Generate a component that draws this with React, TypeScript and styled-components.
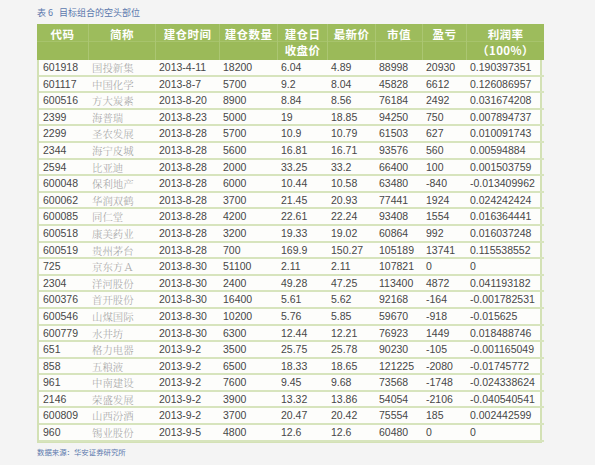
import styled, { createGlobalStyle } from 'styled-components';

// -- DATA --
const rows: string[][] = [
    ['601918', '国投新集', '2013-4-11', '18200', '6.04', '4.89', '88998', '20930', '0.190397351'],
    ['601117', '中国化学', '2013-8-7', '5700', '9.2', '8.04', '45828', '6612', '0.126086957'],
    ['600516', '方大炭素', '2013-8-20', '8900', '8.84', '8.56', '76184', '2492', '0.031674208'],
    ['2399', '海普瑞', '2013-8-23', '5000', '19', '18.85', '94250', '750', '0.007894737'],
    ['2299', '圣农发展', '2013-8-28', '5700', '10.9', '10.79', '61503', '627', '0.010091743'],
    ['2344', '海宁皮城', '2013-8-28', '5600', '16.81', '16.71', '93576', '560', '0.00594884'],
    ['2594', '比亚迪', '2013-8-28', '2000', '33.25', '33.2', '66400', '100', '0.001503759'],
    ['600048', '保利地产', '2013-8-28', '6000', '10.44', '10.58', '63480', '-840', '-0.013409962'],
    ['600062', '华润双鹤', '2013-8-28', '3700', '21.45', '20.93', '77441', '1924', '0.024242424'],
    ['600085', '同仁堂', '2013-8-28', '4200', '22.61', '22.24', '93408', '1554', '0.016364441'],
    ['600518', '康美药业', '2013-8-28', '3200', '19.33', '19.02', '60864', '992', '0.016037248'],
    ['600519', '贵州茅台', '2013-8-28', '700', '169.9', '150.27', '105189', '13741', '0.115538552'],
    ['725', '京东方Ａ', '2013-8-30', '51100', '2.11', '2.11', '107821', '0', '0'],
    ['2304', '洋河股份', '2013-8-30', '2400', '49.28', '47.25', '113400', '4872', '0.041193182'],
    ['600376', '首开股份', '2013-8-30', '16400', '5.61', '5.62', '92168', '-164', '-0.001782531'],
    ['600546', '山煤国际', '2013-8-30', '10200', '5.76', '5.85', '59670', '-918', '-0.015625'],
    ['600779', '水井坊', '2013-8-30', '6300', '12.44', '12.21', '76923', '1449', '0.018488746'],
    ['651', '格力电器', '2013-9-2', '3500', '25.75', '25.78', '90230', '-105', '-0.001165049'],
    ['858', '五粮液', '2013-9-2', '6500', '18.33', '18.65', '121225', '-2080', '-0.01745772'],
    ['961', '中南建设', '2013-9-2', '7600', '9.45', '9.68', '73568', '-1748', '-0.024338624'],
    ['2146', '荣盛发展', '2013-9-2', '3900', '13.32', '13.86', '54054', '-2106', '-0.040540541'],
    ['600809', '山西汾酒', '2013-9-2', '3700', '20.47', '20.42', '75554', '185', '0.002442599'],
    ['960', '锡业股份', '2013-9-5', '4800', '12.6', '12.6', '60480', '0', '0'],
];

const headers: string[][] = [
    ['代码'], ['简称'], ['建仓时间'], ['建仓数量'], ['建仓日', '收盘价'],
    ['最新价'], ['市值'], ['盈亏'], ['利润率', '（100%）'],
];

// -- COMPONENTS --
const GlobalStyle = createGlobalStyle`
    body {
        margin: 0;
        background: #f4f4f4;
        font-family: "Liberation Sans", "Noto Sans CJK SC", sans-serif;
    }
`;

const Page = styled.div`
    padding: 7px 0 0 37px;
`;

const Caption = styled.div`
    font-family: "Noto Sans CJK SC", sans-serif;
    font-size: 9px;
    line-height: 12px;
    height: 17px;
    color: #5b78ad;
`;

const Grid = styled.div`
    display: grid;
    grid-template-columns: 49px 67px 64px 58px 50px 48px 47px 44px 78px;
    width: 505px;
    border-left: 2px solid #d3e1b5;
    border-right: 2px solid #d3e1b5;
    border-bottom: 1px solid #d3e1b5;
    box-sizing: border-box;
    background: #fdfdfb;
`;

const HeadCell = styled.div<{ $first?: boolean }>`
    height: 36px;
    box-sizing: border-box;
    background: linear-gradient(#9dbc5c, #9dbc5c) 0 0 / 100% 17px no-repeat,
        linear-gradient(#a7c36c, #a7c36c) 0 17px / 100% 1px no-repeat, #9bba59;
    border-left: ${p => (p.$first ? 'none' : '1px solid #abc672')};
    color: #fff;
    font-family: "Noto Sans CJK SC", sans-serif;
    font-weight: 700;
    font-size: 11.5px;
    letter-spacing: 0.4px;
    line-height: 16px;
    text-align: center;
    padding-top: 2px;
    margin-left: ${p => (p.$first ? '-2px' : '0')};
`;

const Cell = styled.div<{ $name?: boolean }>`
    height: 16.6px;
    box-sizing: border-box;
    border-bottom: 2px solid #d7e4bd;
    padding-left: 4px;
    font-size: ${p => (p.$name ? '10.4px' : '10.5px')};
    line-height: 15px;
    white-space: nowrap;
    color: ${p => (p.$name ? '#a2a2a2' : '#474747')};
    font-family: ${p =>
        p.$name ? '"Noto Serif CJK SC", "Noto Sans CJK SC", serif' : '"Liberation Sans", Arial, sans-serif'};
    font-weight: ${p => (p.$name ? 300 : 400)};
`;

const Source = styled.div`
    font-family: "Noto Sans CJK SC", sans-serif;
    font-size: 7.4px;
    line-height: 12px;
    margin-top: 3px;
    color: #5b78ad;
`;

const App = () => {
    return (
        <Page>
            <GlobalStyle />
            <Caption>表 6&nbsp;&nbsp;&nbsp;目标组合的空头部位</Caption>
            <Grid>
                {headers.map((h, i) => (
                    <HeadCell key={i} $first={i === 0}>
                        {h.map(line => <div key={line}>{line}</div>)}
                    </HeadCell>
                ))}
                {rows.map(r =>
                    r.map((v, j) => (
                        <Cell key={r[0] + j} $name={j === 1}>{v}</Cell>
                    ))
                )}
            </Grid>
            <Source>数据来源：华安证券研究所</Source>
        </Page>
    );
};

export default App;
